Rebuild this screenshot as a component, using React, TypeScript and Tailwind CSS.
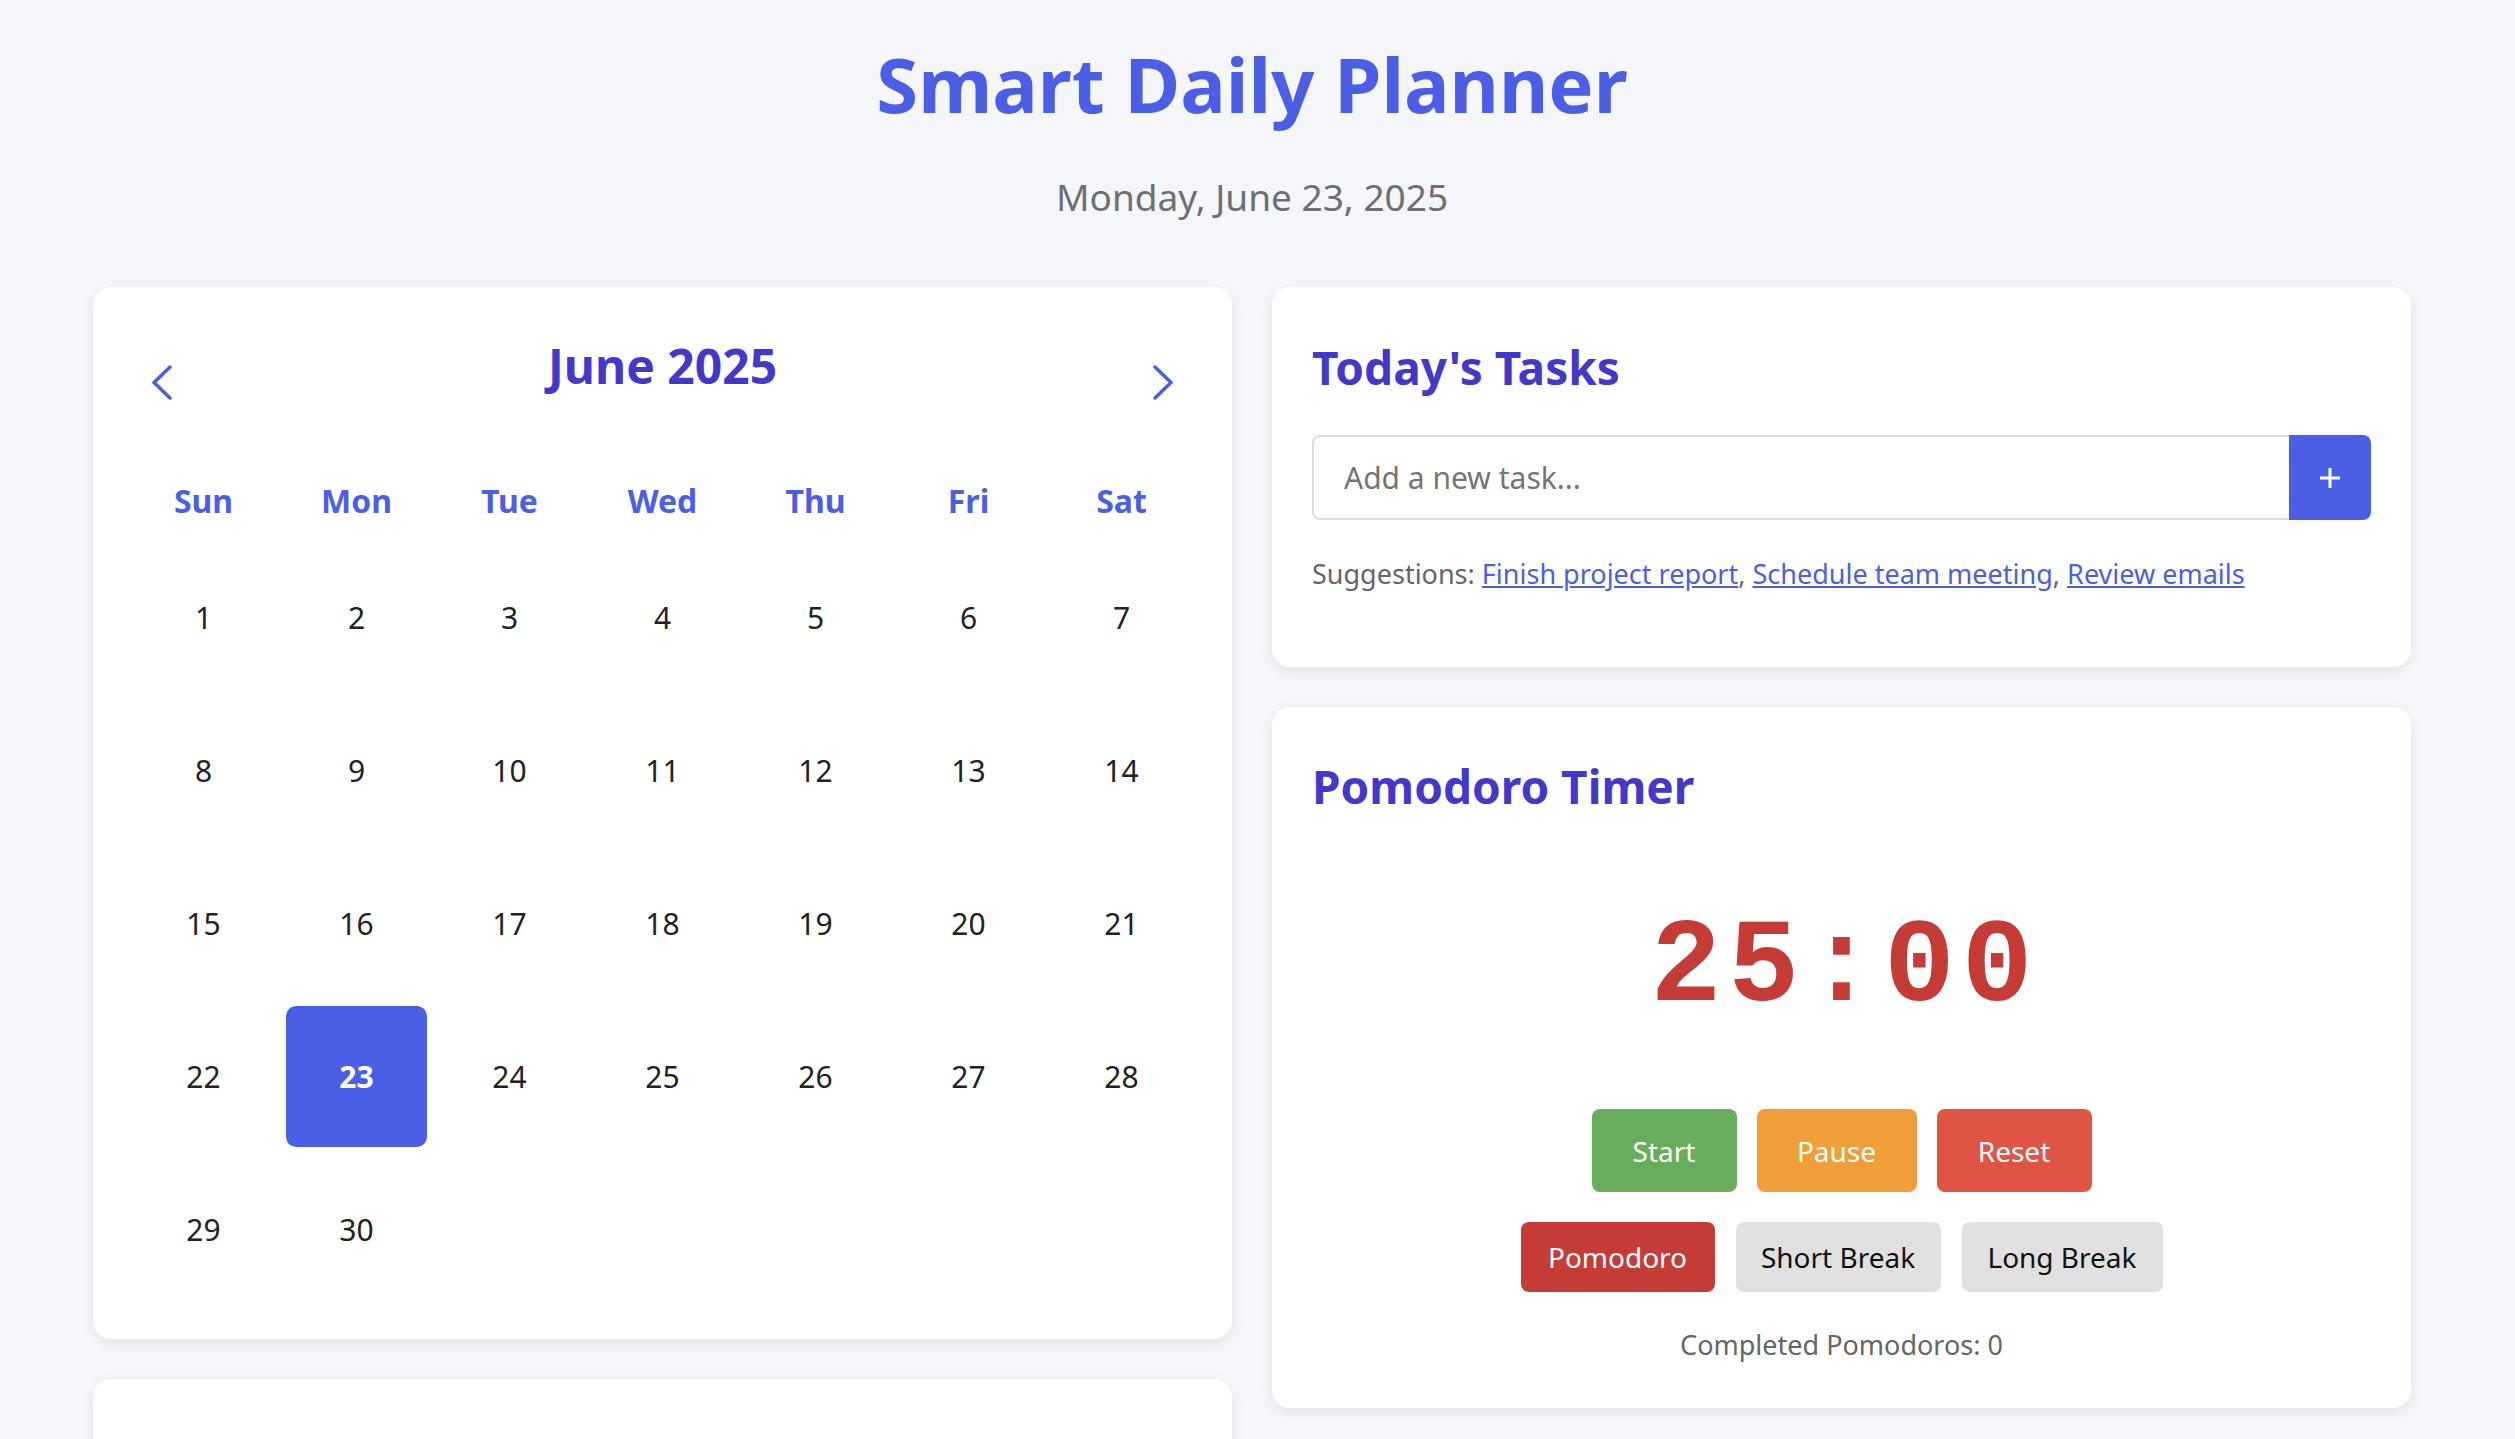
import React from "react";

const FONT = { fontFamily: '"Noto Sans", "Open Sans", sans-serif' };

function ChevronLeft() {
  return (
    <svg width="22" height="35" viewBox="0 0 22 35" fill="none">
      <polyline points="19,2 3,17.5 19,33" stroke="#4a5fe6" strokeWidth="3.5" strokeLinecap="round" strokeLinejoin="round" />
    </svg>
  );
}
function ChevronRight() {
  return (
    <svg width="22" height="35" viewBox="0 0 22 35" fill="none">
      <polyline points="3,2 19,17.5 3,33" stroke="#4a5fe6" strokeWidth="3.5" strokeLinecap="round" strokeLinejoin="round" />
    </svg>
  );
}

const days = ["Sun", "Mon", "Tue", "Wed", "Thu", "Fri", "Sat"];

function Calendar() {
  const cells: (number | null)[] = [];
  for (let d = 1; d <= 30; d++) cells.push(d);
  return (
    <div className="bg-white rounded-[18px] shadow-[0_4px_14px_rgba(0,0,0,0.08)] px-[40px] pt-[40px] pb-[39px]">
      <div className="flex justify-between items-start h-[139px]">
        <button className="mt-[38px] ml-[18px]"><ChevronLeft /></button>
        <h2 className="mt-[10px] text-[48px] leading-[58px] font-bold text-[#4338ca]">June 2025</h2>
        <button className="mt-[38px] mr-[18px]"><ChevronRight /></button>
      </div>
      <div className="grid grid-cols-7 gap-x-[12px] h-[69px] mb-[12px]">
        {days.map((d) => (
          <div key={d} className="flex items-center justify-center text-[32px] font-bold text-[#4a5fe6]">{d}</div>
        ))}
      </div>
      <div className="grid grid-cols-7 gap-[12px]">
        {cells.map((d, i) => (
          <div
            key={i}
            className={
              d === 23
                ? "aspect-square flex items-center justify-center rounded-[10px] bg-[#4a5fe6] text-white font-bold text-[30px]"
                : "aspect-square flex items-center justify-center text-[30px] text-[#222]"
            }
          >
            {d}
          </div>
        ))}
      </div>
    </div>
  );
}

function Tasks() {
  return (
    <div className="bg-white rounded-[18px] shadow-[0_4px_14px_rgba(0,0,0,0.08)] px-[40px] pt-[40px] pb-[40px]">
      <h2 className="mt-[11px] text-[46px] leading-[58px] font-bold text-[#4338ca]">Today's Tasks</h2>
      <div className="flex mt-[39px] h-[85px]">
        <input
          className="flex-1 h-full border-2 border-[#dddddd] rounded-l-[8px] border-r-0 pl-[30px] text-[30px] text-[#333] placeholder:text-[#757575] outline-none bg-white"
          placeholder="Add a new task..."
          style={FONT}
        />
        <button className="w-[82px] h-full bg-[#4a5fe6] rounded-r-[8px] flex items-center justify-center">
          <svg width="22" height="22" viewBox="0 0 22 22">
            <line x1="11" y1="1" x2="11" y2="21" stroke="white" strokeWidth="3" />
            <line x1="1" y1="11" x2="21" y2="11" stroke="white" strokeWidth="3" />
          </svg>
        </button>
      </div>
      <p className="mt-[33px] mb-[32px] text-[27px] leading-[42px] text-[#666]">
        Suggestions:{" "}
        <a className="text-[#4a5fe6] underline" href="#">Finish project report</a>,{" "}
        <a className="text-[#4a5fe6] underline" href="#">Schedule team meeting</a>,{" "}
        <a className="text-[#4a5fe6] underline" href="#">Review emails</a>
      </p>
    </div>
  );
}

function Pomodoro() {
  return (
    <div className="bg-white rounded-[18px] shadow-[0_4px_14px_rgba(0,0,0,0.08)] px-[40px] pt-[40px] pb-[42px]">
      <h2 className="mt-[10px] text-[46px] leading-[58px] font-bold text-[#4338ca]">Pomodoro Timer</h2>
      <div
        className="mt-[95px] pl-[7px] text-center text-[118px] leading-[118px] tracking-[7px] font-bold text-[#c43c35]"
        style={{ fontFamily: '"Liberation Mono", "Courier New", monospace' }}
      >
        25:00
      </div>
      <div className="mt-[81px] flex justify-center gap-[20px]">
        <button className="w-[145px] h-[83px] rounded-[8px] bg-[#68ad5c] text-white text-[28px]">Start</button>
        <button className="w-[160px] h-[83px] rounded-[8px] bg-[#f09e38] text-white text-[28px]">Pause</button>
        <button className="w-[155px] h-[83px] rounded-[8px] bg-[#e05444] text-white text-[28px]">Reset</button>
      </div>
      <div className="mt-[30px] flex justify-center gap-[21px]">
        <button className="w-[194px] h-[70px] rounded-[8px] bg-[#c43c35] text-white text-[28px]">Pomodoro</button>
        <button className="w-[205px] h-[70px] rounded-[8px] bg-[#e0e0e0] text-[#111] text-[28px]">Short Break</button>
        <button className="w-[201px] h-[70px] rounded-[8px] bg-[#e0e0e0] text-[#111] text-[28px]">Long Break</button>
      </div>
      <p className="mt-[32px] text-center text-[27px] leading-[42px] text-[#666]">Completed Pomodoros: 0</p>
    </div>
  );
}

export default function App() {
  return (
    <div className="min-h-screen bg-[#f5f6fa]" style={FONT}>
      <div className="pt-[36px] pl-[93px] pr-[104px] pb-[60px]">
        <h1 className="text-center text-[76px] leading-[96px] font-bold text-[#4a5fe6]">Smart Daily Planner</h1>
        <p className="mt-[36px] text-center text-[37px] leading-[57px] text-[#6b7075]">Monday, June 23, 2025</p>
        <div className="mt-[62px] grid grid-cols-2 gap-[40px] items-start">
          <div className="flex flex-col gap-[40px]">
            <Calendar />
            <div className="bg-white rounded-[18px] shadow-[0_4px_14px_rgba(0,0,0,0.08)] h-[420px]"></div>
          </div>
          <div className="flex flex-col gap-[40px]">
            <Tasks />
            <Pomodoro />
          </div>
        </div>
      </div>
    </div>
  );
}
